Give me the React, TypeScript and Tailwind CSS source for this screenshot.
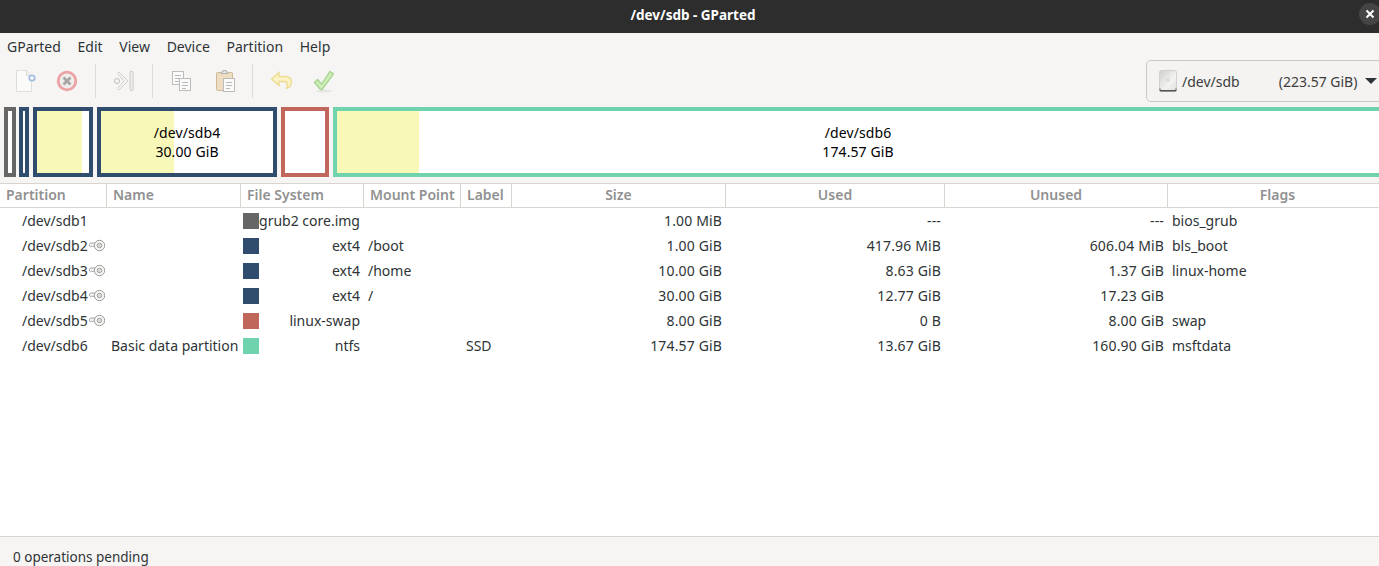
import React from 'react'

const gridCols = 'grid grid-cols-[107px_134px_123px_97px_51px_214px_219px_223px_1fr]'

const headers = [
  { label: 'Partition', className: 'pl-[6px]' },
  { label: 'Name', className: 'pl-[6px]' },
  { label: 'File System', className: 'pl-[6px]' },
  { label: 'Mount Point', className: 'pl-[6px]' },
  { label: 'Label', className: 'pl-[6px]' },
  { label: 'Size', className: 'text-center' },
  { label: 'Used', className: 'text-center' },
  { label: 'Unused', className: 'text-center' },
  { label: 'Flags', className: 'text-center pl-[8px]' },
]

const rows = [
  { part: '/dev/sdb1', locked: false, name: '', color: 'bg-[#666666]', fs: 'grub2 core.img', mount: '', label: '', size: '1.00 MiB', used: '---', unused: '---', flags: 'bios_grub' },
  { part: '/dev/sdb2', locked: true, name: '', color: 'bg-[#304d6d]', fs: 'ext4', mount: '/boot', label: '', size: '1.00 GiB', used: '417.96 MiB', unused: '606.04 MiB', flags: 'bls_boot' },
  { part: '/dev/sdb3', locked: true, name: '', color: 'bg-[#304d6d]', fs: 'ext4', mount: '/home', label: '', size: '10.00 GiB', used: '8.63 GiB', unused: '1.37 GiB', flags: 'linux-home' },
  { part: '/dev/sdb4', locked: true, name: '', color: 'bg-[#304d6d]', fs: 'ext4', mount: '/', label: '', size: '30.00 GiB', used: '12.77 GiB', unused: '17.23 GiB', flags: '' },
  { part: '/dev/sdb5', locked: true, name: '', color: 'bg-[#c1665a]', fs: 'linux-swap', mount: '', label: '', size: '8.00 GiB', used: '0 B', unused: '8.00 GiB', flags: 'swap' },
  { part: '/dev/sdb6', locked: false, name: 'Basic data partition', color: 'bg-[#6fd3ae]', fs: 'ntfs', mount: '', label: 'SSD', size: '174.57 GiB', used: '13.67 GiB', unused: '160.90 GiB', flags: 'msftdata' },
]

const KeyIcon = () => (
  <svg width="16" height="16" viewBox="0 0 16 16" className="shrink-0">
    <path d="M6 5H1.500L.5 6.500v1.500l1 .8 1-.8 1 1 1-1 1.300.6" fill="#f4f4f2" stroke="#9a9a98" strokeWidth="0.900" />
    <circle cx="10.500" cy="7.500" r="5.200" fill="#f6f6f4" stroke="#9a9a98" />
    <circle cx="10.500" cy="7.500" r="2.300" fill="#d8d8d6" stroke="#a4a4a2" />
  </svg>
)

const NewIcon = () => (
  <svg width="24" height="24" viewBox="0 0 24 24">
    <path d="M1.500 1.500h10l5 5v16h-15z" fill="#fbfbfa" stroke="#dedddb" />
    <path d="M11.500 1.500v5h5" fill="#efefed" stroke="#dedddb" />
    <circle cx="17" cy="9" r="3.600" fill="#a3bde0" />
    <path d="M15 9h4M17 7v4" stroke="#fff" strokeWidth="1.400" />
  </svg>
)

const CancelIcon = () => (
  <svg width="22" height="22" viewBox="0 0 22 22">
    <circle cx="11" cy="11" r="8.800" fill="#f0eeec" stroke="#eba3a3" strokeWidth="2.800" />
    <path d="M7.500 7.500l7 7M14.500 7.500l-7 7" stroke="#a8a6a3" strokeWidth="2.800" />
  </svg>
)

const ApplyAllIcon = () => (
  <svg width="22" height="22" viewBox="0 0 22 22">
    <path d="M6 2l9 9-9 9-1.500-1.500L11 11 4.500 3.500z" fill="#f3f2f0" stroke="#d2d1ce" />
    <circle cx="4" cy="11" r="2.500" fill="#f6f5f4" stroke="#bdbcb9" />
    <rect x="17" y="1.500" width="3" height="19" rx="1" fill="#f0efed" stroke="#c9c8c5" />
  </svg>
)

const DocLines = ({ x, y, w, h }: { x: number; y: number; w: number; h: number }) => (
  <g>
    <rect x={x + 0.5} y={y + 0.5} width={w} height={h} fill="#fafafa" stroke="#bcbcba" />
    <path d={`M${x + 3} ${y + 4.5}h${w - 5}M${x + 3} ${y + 7.5}h${w - 5}M${x + 3} ${y + 10.5}h${w - 7}`} stroke="#b8b8b6" />
  </g>
)

const CopyIcon = () => (
  <svg width="22" height="22" viewBox="0 0 22 22">
    <DocLines x={1} y={1} w={11} h={13} />
    <DocLines x={8} y={8} w={11} h={12} />
  </svg>
)

const PasteIcon = () => (
  <svg width="24" height="24" viewBox="0 0 24 24">
    <rect x="2.500" y="3.500" width="16" height="18" rx="1" fill="#eeddc0" stroke="#cdb995" />
    <path d="M7 4.500V3h2V1.500h3V3h2v1.500z" fill="#e8e8e6" stroke="#b4b4b2" />
    <DocLines x={9} y={9} w={11} h={13} />
  </svg>
)

const UndoIcon = () => (
  <svg width="24" height="24" viewBox="0 0 24 24">
    <path d="M9 3.500L1.500 10 9 16.500v-4h5c2.500 0 3.500 1.200 3.500 3.500 0 1.200-.5 2.500-1 3.500 3-1 5-3.500 5-6.500 0-3.500-2.500-5.500-6-5.500H9z" fill="#fbf3c4" stroke="#ebdc8f" strokeWidth="1.300" />
  </svg>
)

const CheckIcon = () => (
  <svg width="22" height="24" viewBox="0 0 22 24">
    <ellipse cx="11" cy="22" rx="8" ry="1.500" fill="#e6e5e3" />
    <path d="M1.500 13.500l3-3 4 4.500L17 2.500 20.500 5 9 20.500H7.500z" fill="#cdedb3" stroke="#a9d394" strokeWidth="1.300" />
  </svg>
)

const DiskIcon = () => (
  <svg width="18" height="22" viewBox="0 0 18 22">
    <defs>
      <linearGradient id="disk" x1="0" y1="0" x2="1" y2="1">
        <stop offset="0" stopColor="#cfcfcd" />
        <stop offset="0.600" stopColor="#f2f2f0" />
        <stop offset="1" stopColor="#dededc" />
      </linearGradient>
    </defs>
    <rect x="0.500" y="0.500" width="17" height="21" rx="2" fill="url(#disk)" stroke="#d0d0ce" />
    <circle cx="9" cy="10" r="1.500" fill="#d4d4d2" />
    <path d="M.5 18.500v1.500a1.500 1.500 0 001.500 1.500h14a1.500 1.500 0 001.500-1.500v-1.500h-1v1.500H1.500v-1.500z" fill="#55554f" />
  </svg>
)

const ToolSep = () => <div className="w-px h-[34px] bg-[#dcdad7] shrink-0" />

const PartBox = ({ className, fill, lines }: { className: string; fill?: string; lines?: string[] }) => (
  <div className={`relative h-[70px] border-4 bg-white shrink-0 ${className}`}>
    {fill && <div className={`h-full bg-[#f8f8b8] ${fill}`} />}
    {lines && (
      <div className="absolute inset-0 flex flex-col items-center justify-center leading-[19px] text-[#000] tracking-[0.1px]">
        {lines.map((l) => (
          <span key={l}>{l}</span>
        ))}
      </div>
    )}
  </div>
)

export default function App() {
  return (
    <div className="flex flex-col h-screen overflow-hidden bg-white text-[#2e3436] text-[14px] font-['Noto_Sans','Open_Sans',sans-serif]">
      <div className="relative h-[33px] shrink-0 bg-[#2d2d2d] flex items-center justify-center text-white font-bold text-[13.500px] pb-[3px] pl-[7px]">
        /dev/sdb - GParted
        <div className="absolute left-[1359px] top-[3px] w-[22px] h-[22px] rounded-full bg-[#454545] flex items-center justify-center">
          <svg width="10" height="10" viewBox="0 0 10 10">
            <path d="M1.500 1.500l7 7M8.500 1.500l-7 7" stroke="#fff" strokeWidth="2" />
          </svg>
        </div>
      </div>

      <div className="h-[27px] shrink-0 bg-[#f6f5f4] flex items-center gap-[16.700px] pl-[7px]">
        {['GParted', 'Edit', 'View', 'Device', 'Partition', 'Help'].map((m) => (
          <span key={m}>{m}</span>
        ))}
      </div>

      <div className="h-[47px] shrink-0 bg-[#f6f5f4] flex items-start">
        <div className="flex items-center h-[42px]">
          <div className="w-[15px]" />
          <NewIcon />
          <div className="w-[17px]" />
          <CancelIcon />
          <div className="w-[17px]" />
          <ToolSep />
          <div className="w-[17px]" />
          <ApplyAllIcon />
          <div className="w-[17px]" />
          <ToolSep />
          <div className="w-[18px]" />
          <CopyIcon />
          <div className="w-[21px]" />
          <PasteIcon />
          <div className="w-[14px]" />
          <ToolSep />
          <div className="w-[17px]" />
          <UndoIcon />
          <div className="w-[19px]" />
          <CheckIcon />
        </div>
        <div className="ml-auto w-[240px] -mr-[7px] h-[42px] shrink-0 rounded-[5px] border border-[#cdc7c2] bg-[#f4f3f1] flex items-center pl-[12px] text-[#3d3d3d]">
          <DiskIcon />
          <span className="ml-[5px]">/dev/sdb</span>
          <span className="ml-[39px]">(223.57 GiB)</span>
          <span className="ml-[8px] w-0 h-0 border-l-[6px] border-r-[6px] border-t-[6px] border-l-transparent border-r-transparent border-t-[#2e3436]" />
        </div>
      </div>

      <div className="h-[76px] shrink-0 bg-[#f6f5f4] flex items-start gap-[4px] pl-[4px] overflow-hidden">
        <PartBox className="w-[12px] border-[#666666]" />
        <PartBox className="w-[10px] -ml-px border-[#304d6d]" />
        <PartBox className="w-[60px] border-[#304d6d]" fill="w-[45px]" />
        <PartBox className="w-[180px] border-[#304d6d]" fill="w-[73px]" lines={['/dev/sdb4', '30.00 GiB']} />
        <PartBox className="w-[48px] border-[#c1665a]" />
        <PartBox className="w-[1050px] border-[#6fd3ae]" fill="w-[82px]" lines={['/dev/sdb6', '174.57 GiB']} />
      </div>

      <div className="flex-1 bg-white min-h-0">
        <div className={`${gridCols} h-[25px] border-y border-[#d8d4d0] text-[#919191] font-semibold`}>
          {headers.map((h, i) => (
            <div key={h.label} className={`leading-[22px] border-[#d8d4d0] ${i < headers.length - 1 ? 'border-r' : ''} ${h.className}`}>
              {h.label}
            </div>
          ))}
        </div>
        {rows.map((r) => (
          <div key={r.part} className={`${gridCols} h-[25px] items-center`}>
            <div className="pl-[22px] flex items-center gap-[1px]">
              <span>{r.part}</span>
              {r.locked && <KeyIcon />}
            </div>
            <div className="pl-[4px] whitespace-nowrap">{r.name}</div>
            <div className="pl-[2px] pr-[4px] flex items-center">
              <span className={`w-4 h-4 shrink-0 ${r.color}`} />
              <span className="ml-auto whitespace-nowrap">{r.fs}</span>
            </div>
            <div className="pl-[4px]">{r.mount}</div>
            <div className="pl-[5px]">{r.label}</div>
            <div className="text-right pr-[4px] tracking-[0.15px]">{r.size}</div>
            <div className="text-right pr-[4px] tracking-[0.15px]">{r.used}</div>
            <div className="text-right pr-[4px] tracking-[0.15px]">{r.unused}</div>
            <div className="pl-[4px]">{r.flags}</div>
          </div>
        ))}
      </div>

      <div className="h-[30px] shrink-0 border-t border-[#d8d4d0] bg-[#f6f5f4] flex items-center pl-[13px] pt-[12px] text-[13.500px]">
        0 operations pending
      </div>
    </div>
  )
}
